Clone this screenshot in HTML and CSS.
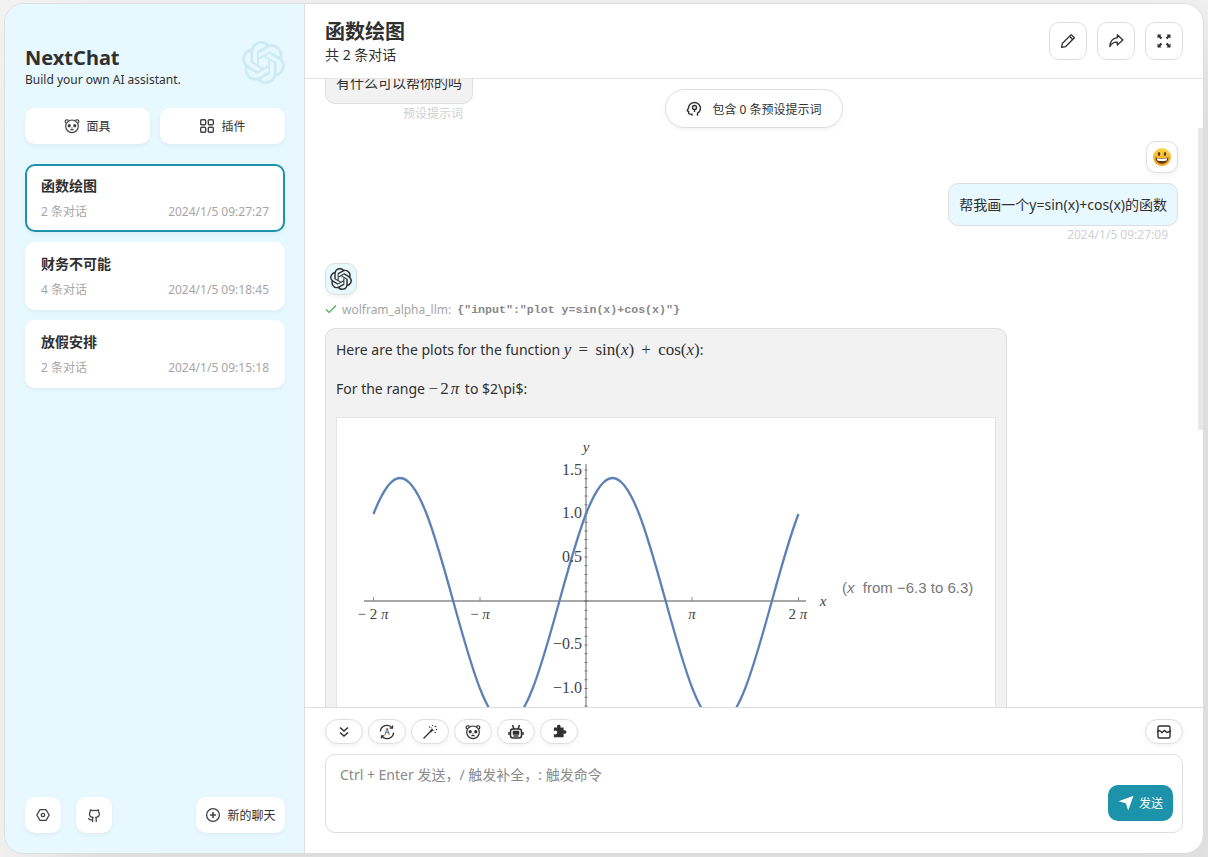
FILE: index.html
```html
<!DOCTYPE html>
<html lang="zh">
<head>
    <meta charset="UTF-8">
    <meta name="viewport" content="width=device-width, initial-scale=1.0">
    <title>NextChat</title>
    <link rel="stylesheet" href="styles.css">
</head>
<body>
    <svg class="defs" width="0" height="0">
        <symbol id="gpt" viewBox="0 0 24 24">
            <path fill="currentColor" d="M22.2819 9.8211a5.9847 5.9847 0 0 0-.5157-4.9108 6.0462 6.0462 0 0 0-6.5098-2.9A6.0651 6.0651 0 0 0 4.9807 4.1818a5.9847 5.9847 0 0 0-3.9977 2.9 6.0462 6.0462 0 0 0 .7427 7.0966 5.98 5.98 0 0 0 .511 4.9107 6.051 6.051 0 0 0 6.5146 2.9001A5.9847 5.9847 0 0 0 13.2599 24a6.0557 6.0557 0 0 0 5.7718-4.2058 5.9894 5.9894 0 0 0 3.9977-2.9001 6.0557 6.0557 0 0 0-.7475-7.0729zm-9.022 12.6081a4.4755 4.4755 0 0 1-2.8764-1.0408l.1419-.0804 4.7783-2.7582a.7948.7948 0 0 0 .3927-.6813v-6.7369l2.02 1.1686a.071.071 0 0 1 .038.052v5.5826a4.504 4.504 0 0 1-4.4945 4.4944zm-9.6607-4.1254a4.4708 4.4708 0 0 1-.5346-3.0137l.142.0852 4.783 2.7582a.7712.7712 0 0 0 .7806 0l5.8428-3.3685v2.3324a.0804.0804 0 0 1-.0332.0615L9.74 19.9502a4.4992 4.4992 0 0 1-6.1408-1.6464zM2.3408 7.8956a4.485 4.485 0 0 1 2.3655-1.9728V11.6a.7664.7664 0 0 0 .3879.6765l5.8144 3.3543-2.0201 1.1685a.0757.0757 0 0 1-.071 0l-4.8303-2.7865A4.504 4.504 0 0 1 2.3408 7.872zm16.5963 3.8558L13.1038 8.364 15.1192 7.2a.0757.0757 0 0 1 .071 0l4.8303 2.7913a4.4944 4.4944 0 0 1-.6765 8.1042v-5.6772a.79.79 0 0 0-.407-.667zm2.0107-3.0231l-.142-.0852-4.7735-2.7818a.7759.7759 0 0 0-.7854 0L9.409 9.2297V6.8974a.0662.0662 0 0 1 .0284-.0615l4.8303-2.7866a4.4992 4.4992 0 0 1 6.6802 4.66zM8.3065 12.863l-2.02-1.1638a.0804.0804 0 0 1-.038-.0567V6.0742a4.4992 4.4992 0 0 1 7.3757-3.4537l-.142.0805L8.704 5.459a.7948.7948 0 0 0-.3927.6813zm1.0976-2.3654l2.602-1.4998 2.6069 1.4998v2.9994l-2.5974 1.4997-2.6067-1.4997Z"/>
        </symbol>
        <symbol id="panda" viewBox="0 0 16 16">
            <g fill="none" stroke="currentColor" stroke-width="1.200">
                <circle cx="8" cy="8.300" r="6.300"/>
                <path d="M2.600 5.200C1.500 4.800 1 4 1.200 3c.3-1 1.400-1.500 2.400-1.100.4.200.7.400.9.700M13.400 5.200c1.100-.4 1.600-1.200 1.400-2.200-.3-1-1.400-1.500-2.400-1.100-.4.200-.7.400-.9.700"/>
                <path d="M6.400 12.100c1-.8 2.200-.8 3.200 0"/>
            </g>
            <ellipse cx="5.200" cy="7.800" rx="1.600" ry="1.800" fill="currentColor"/>
            <ellipse cx="10.800" cy="7.800" rx="1.600" ry="1.800" fill="currentColor"/>
            <circle cx="8" cy="9.800" r=".6" fill="currentColor"/>
        </symbol>
    </svg>

    <div class="window">
        <aside class="sidebar">
            <div class="side-head">
                <div>
                    <div class="side-title">NextChat</div>
                    <div class="side-sub">Build your own AI assistant.</div>
                </div>
                <svg class="side-logo" width="43" height="43"><use href="#gpt"/></svg>
            </div>

            <div class="side-tabs">
                <button class="side-btn">
                    <svg width="16" height="16"><use href="#panda"/></svg>
                    <span>面具</span>
                </button>
                <button class="side-btn">
                    <svg width="16" height="16" viewBox="0 0 16 16" fill="none" stroke="currentColor" stroke-width="1.400">
                        <rect x="1.700" y="1.700" width="5" height="5" rx="1"/>
                        <rect x="9.300" y="1.700" width="5" height="5" rx="1"/>
                        <rect x="1.700" y="9.300" width="5" height="5" rx="1"/>
                        <rect x="9.300" y="9.300" width="5" height="5" rx="1"/>
                    </svg>
                    <span>插件</span>
                </button>
            </div>

            <div class="chat-list">
                <div class="chat-item selected">
                    <div class="chat-title">函数绘图</div>
                    <div class="chat-info"><span>2 条对话</span><span>2024/1/5 09:27:27</span></div>
                </div>
                <div class="chat-item">
                    <div class="chat-title">财务不可能</div>
                    <div class="chat-info"><span>4 条对话</span><span>2024/1/5 09:18:45</span></div>
                </div>
                <div class="chat-item">
                    <div class="chat-title">放假安排</div>
                    <div class="chat-info"><span>2 条对话</span><span>2024/1/5 09:15:18</span></div>
                </div>
            </div>

            <div class="side-foot">
                <button class="side-btn square">
                    <svg width="16" height="16" viewBox="0 0 16 16" fill="none" stroke="currentColor" stroke-width="1.300">
                        <path d="M5 2.600h6L14.200 8 11 13.400H5L1.800 8z" stroke-linejoin="round"/>
                        <circle cx="8" cy="8" r="1.700"/>
                    </svg>
                </button>
                <button class="side-btn square">
                    <svg width="16" height="16" viewBox="0 0 16 16" fill="none" stroke="currentColor" stroke-width="1.300" stroke-linecap="round" stroke-linejoin="round">
                        <path d="M10.200 14.600v-2.500c0-.9-.2-1.300-.6-1.700 2.100-.2 3.700-1.100 3.700-3.500 0-.8-.3-1.500-.8-2 .2-.6.2-1.300-.1-2-.7 0-1.400.3-2 .8a7 7 0 0 0-4 0c-.6-.5-1.300-.8-2-.8-.3.7-.3 1.400-.1 2-.5.5-.8 1.200-.8 2 0 2.400 1.600 3.300 3.700 3.500-.4.4-.6.8-.6 1.700v2.500"/>
                        <path d="M5.800 12.800c-1.800.6-2.400-.6-3.200-1.200"/>
                    </svg>
                </button>
                <button class="side-btn new-chat">
                    <svg width="16" height="16" viewBox="0 0 16 16" fill="none" stroke="currentColor" stroke-width="1.300">
                        <circle cx="8" cy="8" r="6.400"/>
                        <path d="M8 5v6M5 8h6" stroke-width="1.600"/>
                    </svg>
                    <span>新的聊天</span>
                </button>
            </div>
        </aside>

        <main class="chat">
            <header class="chat-head">
                <div>
                    <div class="head-title">函数绘图</div>
                    <div class="head-sub">共 2 条对话</div>
                </div>
                <div class="head-actions">
                    <button class="head-btn">
                        <svg width="16" height="16" viewBox="0 0 16 16" fill="none" stroke="currentColor" stroke-width="1.300" stroke-linejoin="round">
                            <path d="M11.200 1.600l3.200 3.200-8.900 8.900-3.900.7.700-3.900z"/>
                            <path d="M9.500 3.300l3.200 3.200"/>
                        </svg>
                    </button>
                    <button class="head-btn">
                        <svg width="16" height="16" viewBox="0 0 16 16" fill="none" stroke="currentColor" stroke-width="1.300" stroke-linejoin="round">
                            <path d="M9.300 1.800l5.600 5.100-5.600 5.100V9.200C6 9 3.600 10.400 1.800 13.600 2 8.800 4.800 5.400 9.300 4.700z"/>
                        </svg>
                    </button>
                    <button class="head-btn">
                        <svg width="16" height="16" viewBox="0 0 16 16" fill="currentColor">
                            <path d="M1.500 1.500h4L4.300 2.700l2 2-1.600 1.600-2-2L1.500 5.500zM14.500 1.500v4l-1.200-1.200-2 2-1.600-1.600 2-2-1.200-1.200zM1.500 14.500v-4l1.200 1.200 2-2 1.600 1.600-2 2 1.200 1.200zM14.500 14.500h-4l1.200-1.200-2-2 1.600-1.600 2 2 1.200-1.200z"/>
                        </svg>
                    </button>
                </div>
            </header>

            <section class="chat-body">
                <div class="prompt-toast">
                    <svg width="16" height="16" viewBox="0 0 16 16" fill="none" stroke="currentColor" stroke-width="1.400" stroke-linejoin="round">
                        <path d="M11.500 14.800v-2.600c1.800-1.200 3-3 3-5 0-3.200-2.800-5.700-6-5.700-3.200 0-5.800 2.400-6 5.400L1.200 9.800l1.400.6v1.700c0 .6.500 1 1.100 1H6v1.700"/>
                        <circle cx="8.500" cy="6.500" r="2"/>
                        <path d="M8.500 8.500v2.500"/>
                    </svg>
                    <span>包含 0 条预设提示词</span>
                </div>

                <div class="scroll-thumb"></div>

                <div class="messages">
                    <div class="msg first">
                        <div class="bubble">有什么可以帮你的吗</div>
                        <div class="msg-date">预设提示词</div>
                    </div>

                    <div class="msg user">
                        <div class="avatar">
                            <svg width="20" height="20" viewBox="0 0 20 20">
                                <defs>
                                    <linearGradient id="smile" x1="0" y1="0" x2="0" y2="1">
                                        <stop offset="0" stop-color="#fbd54a"/>
                                        <stop offset="1" stop-color="#ee9b16"/>
                                    </linearGradient>
                                </defs>
                                <circle cx="10" cy="10" r="9" fill="url(#smile)"/>
                                <ellipse cx="7" cy="7" rx="1.200" ry="2" fill="#5b3a10"/>
                                <ellipse cx="13" cy="7" rx="1.200" ry="2" fill="#5b3a10"/>
                                <path d="M3.500 10.500c4 1 9 1 13 0-.3 4-3 6.200-6.500 6.200s-6.200-2.200-6.500-6.200z" fill="#5b3a10"/>
                                <path d="M4.800 11.300c3.400.6 7 .6 10.400 0-.2 1.200-.6 2-1 2.400-2.700.4-5.700.4-8.400 0-.4-.5-.8-1.200-1-2.400z" fill="#fff"/>
                            </svg>
                        </div>
                        <div class="bubble">帮我画一个y=sin(x)+cos(x)的函数</div>
                        <div class="msg-date">2024/1/5 09:27:09</div>
                    </div>

                    <div class="msg">
                        <div class="avatar">
                            <svg width="22" height="22"><use href="#gpt"/></svg>
                        </div>
                        <div class="tool-line">
                            <svg width="12" height="12" viewBox="0 0 12 12" fill="none" stroke="#4caf50" stroke-width="1.200">
                                <path d="M1 6.500l3.200 3L11 2.500"/>
                            </svg>
                            <span class="tool-name">wolfram_alpha_llm:</span>
                            <code class="tool-args">{"input":"plot y=sin(x)+cos(x)"}</code>
                        </div>
                        <div class="bubble answer">
                            <p>Here are the plots for the function <span class="math"><i>y</i> = sin(<i>x</i>) + cos(<i>x</i>)</span>:</p>
                            <p>For the range <span class="math range">−2<i>π</i></span> to $2\pi$:</p>
                            <svg class="plot" width="660" height="300" viewBox="336 417 660 300">
                                <rect x="336.500" y="417.500" width="659" height="299" fill="#fff" stroke="#e4e4e4"/>
                                <path d="M364 601H806M586 464V718" stroke="#8a8a8a" stroke-width="1.300" fill="none"/>
                                <path d="M586 601V464M586 601V718" stroke="#777" stroke-width="3" stroke-dasharray="1 7.700" fill="none"/>
                                <path d="M373.500 597v4M480 597v4M692 597v4M798.500 597v4" stroke="#8a8a8a" fill="none"/>
                                <path fill="none" stroke="#5e81b5" stroke-width="2.300" d="M373.500 514
                                    c8.850 -22.780 17.710 -36 26.560 -36 c8.850 0 17.710 13.220 26.560 36
                                    c8.850 22.780 17.710 54.800 26.560 87 c8.850 32.200 17.710 64.220 26.560 87
                                    c8.850 22.780 17.710 36 26.560 36 c8.850 0 17.710 -13.220 26.560 -36
                                    c8.850 -22.780 17.710 -54.800 26.560 -87 c8.850 -32.200 17.710 -64.220 26.560 -87
                                    c8.850 -22.780 17.710 -36 26.560 -36 c8.850 0 17.710 13.220 26.560 36
                                    c8.850 22.780 17.710 54.800 26.560 87 c8.850 32.200 17.710 64.220 26.560 87
                                    c8.850 22.780 17.710 36 26.560 36 c8.850 0 17.710 -13.220 26.560 -36
                                    c8.850 -22.780 17.710 -54.800 26.560 -87 c8.850 -32.200 17.710 -64.220 26.560 -87"/>
                                <g class="plot-num" text-anchor="end">
                                    <text x="582" y="475">1.5</text>
                                    <text x="582" y="518">1.0</text>
                                    <text x="582" y="562">0.5</text>
                                    <text x="582" y="649">−0.5</text>
                                    <text x="582" y="693">−1.0</text>
                                </g>
                                <g class="plot-num small" text-anchor="middle">
                                    <text x="373" y="619">− 2 <tspan class="plot-it">π</tspan></text>
                                    <text x="480" y="619">− <tspan class="plot-it">π</tspan></text>
                                    <text x="692" y="619" class="plot-it">π</text>
                                    <text x="798" y="619">2 <tspan class="plot-it">π</tspan></text>
                                    <text x="823" y="606" class="plot-it">x</text>
                                    <text x="586" y="452" class="plot-it">y</text>
                                </g>
                                <text class="plot-range" x="842" y="593">(<tspan font-style="italic">x</tspan>  from −6.3 to 6.3)</text>
                            </svg>
                        </div>
                    </div>
                </div>
            </section>

            <footer class="chat-input">
                <div class="tool-row">
                    <div class="chips">
                        <button class="chip">
                            <svg width="16" height="16" viewBox="0 0 16 16" fill="none" stroke="currentColor" stroke-width="1.500">
                                <path d="M4 3.500l4 3.500 4-3.500M4 8.500l4 3.500 4-3.500"/>
                            </svg>
                        </button>
                        <button class="chip">
                            <svg width="16" height="16" viewBox="0 0 16 16" fill="none" stroke="currentColor" stroke-width="1.300">
                                <path d="M1.400 7.500a6.600 6.600 0 0 1 11.600-3.800M14.600 8.500a6.600 6.600 0 0 1-11.600 3.800"/>
                                <path d="M13.500 1.400v2.800h-2.800M2.500 14.600v-2.800h2.800"/>
                                <text class="chip-letter" x="8" y="11" text-anchor="middle">A</text>
                            </svg>
                        </button>
                        <button class="chip">
                            <svg width="16" height="16" viewBox="0 0 16 16" fill="none" stroke="currentColor">
                                <path d="M1.500 14.500L8.500 7.500" stroke-width="1.200"/>
                                <path d="M8.300 7.700l2.500-2.500" stroke-width="2"/>
                                <g fill="currentColor" stroke="none">
                                    <circle cx="7.500" cy="3" r=".7"/>
                                    <circle cx="10.500" cy="1.600" r=".7"/>
                                    <circle cx="13.500" cy="2.500" r=".8"/>
                                    <circle cx="14.500" cy="5.500" r=".7"/>
                                    <circle cx="13.200" cy="8.500" r=".7"/>
                                    <circle cx="11.800" cy="6.800" r=".5"/>
                                    <circle cx="9.200" cy="3.800" r=".5"/>
                                </g>
                            </svg>
                        </button>
                        <button class="chip">
                            <svg width="16" height="16"><use href="#panda"/></svg>
                        </button>
                        <button class="chip">
                            <svg width="16" height="16" viewBox="0 0 16 16" fill="none" stroke="currentColor" stroke-width="1.500">
                                <rect x="2.500" y="5" width="11" height="9" rx="2.500"/>
                                <path d="M4.500 1l1.500 4M11.500 1L10 5M1 8v3M15 8v3"/>
                                <path d="M5.500 7.500h5v2.500h-5z" fill="currentColor"/>
                                <path d="M5.500 12h5"/>
                            </svg>
                        </button>
                        <button class="chip">
                            <svg width="16" height="16" viewBox="0 0 16 16" fill="currentColor">
                                <path d="M6 2.500C6 1.400 6.900.8 7.800.8s1.800.6 1.800 1.700c0 .5-.2.800-.3 1.100h3.300v3c.4-.2.700-.3 1.100-.3 1 0 1.700.8 1.700 1.700s-.7 1.800-1.700 1.800c-.4 0-.7-.1-1.100-.3v3.800H2.900V9.900c.4.300.9.500 1.400.5 1.100 0 1.900-.9 1.900-1.900S5.400 6.600 4.300 6.600c-.5 0-1 .2-1.400.5v-3.500h3.400C6.100 3.300 6 2.900 6 2.500z"/>
                            </svg>
                        </button>
                    </div>
                    <button class="chip">
                        <svg width="16" height="16" viewBox="0 0 16 16" fill="none" stroke="currentColor" stroke-width="1.400">
                            <rect x="2" y="2" width="12" height="12" rx="1.500"/>
                            <path d="M1 8l2.500-1.500L6 8.500l2.500-2 2.500 2L15 7"/>
                        </svg>
                    </button>
                </div>
                <div class="input-box">
                    <div class="placeholder">Ctrl + Enter 发送，/ 触发补全，: 触发命令</div>
                    <button class="send-btn">
                        <svg width="16" height="16" viewBox="0 0 16 16" fill="#fff">
                            <path d="M15.500 .8L10.200 15.500 7.800 8.300 .6 6.300z"/>
                        </svg>
                        <span>发送</span>
                    </button>
                </div>
            </footer>
        </main>
    </div>
</body>
</html>
```

FILE: styles.css
```css
* {
    box-sizing: border-box;
}
body {
    margin: 0;
    height: 857px;
    overflow: hidden;
    display: flex;
    align-items: center;
    justify-content: center;
    background-color: #f3f3f3;
    font-family: "Noto Sans", "Noto Sans CJK SC", sans-serif;
    font-size: 14px;
    color: #303030;
}
button {
    font: inherit;
    color: inherit;
    border: none;
    background: none;
    padding: 0;
}
svg {
    display: block;
    flex-shrink: 0;
}
.defs {
    position: absolute;
}
.window {
    width: 1200px;
    height: 851px;
    display: flex;
    background: white;
    border: 1px solid #dedede;
    border-radius: 20px;
    overflow: hidden;
    box-shadow: 50px 50px 100px 10px rgba(0, 0, 0, 0.1);
}

/* sidebar */
.sidebar {
    width: 300px;
    flex-shrink: 0;
    display: flex;
    flex-direction: column;
    padding: 20px 19px 20px 20px;
    background-color: #e7f8ff;
    border-right: 1px solid #dedede;
}
.side-head {
    display: flex;
    justify-content: space-between;
    padding-top: 20px;
    height: 84px;
}
.side-title {
    font-size: 20px;
    font-weight: 700;
    line-height: 28px;
}
.side-sub {
    font-size: 12px;
    line-height: 16px;
}
.side-logo {
    color: #1d93ab;
    opacity: 0.12;
    margin-top: -3px;
}
.side-tabs {
    display: flex;
    gap: 10px;
}
.side-btn {
    flex: 1;
    height: 36px;
    display: flex;
    align-items: center;
    justify-content: center;
    gap: 5px;
    background: white;
    border-radius: 10px;
    font-size: 12px;
    box-shadow: 0 2px 4px 0 rgba(0, 0, 0, 0.05);
}
.side-btn svg {
    margin-right: 1px;
    color: #444;
}
.chat-list {
    flex: 1;
    padding-top: 20px;
}
.chat-item {
    height: 68px;
    margin-bottom: 10px;
    padding: 10px 14px;
    background: white;
    border: 2px solid transparent;
    border-radius: 10px;
    box-shadow: 0 2px 4px 0 rgba(0, 0, 0, 0.05);
}
.chat-item.selected {
    border-color: #1d93ab;
}
.chat-title {
    font-size: 14px;
    font-weight: 700;
    line-height: 20px;
}
.chat-info {
    display: flex;
    justify-content: space-between;
    margin-top: 8px;
    font-size: 12px;
    line-height: 16px;
    color: #a6a6a6;
}
.side-foot {
    display: flex;
    gap: 15px;
}
.side-btn.square {
    flex: none;
    width: 36px;
}
.side-btn.new-chat {
    flex: none;
    width: 89px;
    margin-left: auto;
}

/* chat */
.chat {
    flex: 1;
    min-width: 0;
    display: flex;
    flex-direction: column;
}
.chat-head {
    height: 75px;
    flex-shrink: 0;
    display: flex;
    justify-content: space-between;
    align-items: center;
    padding: 0 20px;
    border-bottom: 1px solid #e4e4e4;
}
.head-title {
    font-size: 20px;
    font-weight: 700;
    line-height: 28px;
}
.head-sub {
    font-size: 14px;
    line-height: 18px;
}
.head-actions {
    display: flex;
    gap: 10px;
}
.head-btn {
    width: 38px;
    height: 38px;
    display: flex;
    align-items: center;
    justify-content: center;
    border: 1px solid #dedede;
    border-radius: 10px;
}
.chat-body {
    flex: 1;
    min-height: 0;
    position: relative;
    overflow: hidden;
}
.messages {
    margin-top: -18px;
    padding: 0 20px;
}
.prompt-toast {
    position: absolute;
    top: 10px;
    left: 360px;
    width: 178px;
    height: 39px;
    display: flex;
    align-items: center;
    justify-content: center;
    gap: 10px;
    background: white;
    border: 1px solid #dedede;
    border-radius: 20px;
    font-size: 12px;
    box-shadow: 0 2px 4px 0 rgba(0, 0, 0, 0.05);
    z-index: 2;
}
.scroll-thumb {
    position: absolute;
    top: 49px;
    right: 0;
    width: 5px;
    height: 302px;
    background: #e8e8e8;
}
.msg {
    display: flex;
    flex-direction: column;
    align-items: flex-start;
    margin-bottom: 20px;
}
.msg.first {
    width: fit-content;
    margin-bottom: 19px;
}
.msg.first .msg-date {
    padding-top: 1px;
}
.msg.user {
    align-items: flex-end;
}
.bubble {
    padding: 10px;
    line-height: 21px;
    background: rgba(0, 0, 0, 0.05);
    border: 1px solid #dedede;
    border-radius: 10px;
}
.msg.user .bubble {
    margin-top: 10px;
    margin-right: 5px;
    background: #e7f8ff;
}
.msg-date {
    align-self: flex-end;
    padding-right: 10px;
    font-size: 12px;
    line-height: 17px;
    color: #d0d0d0;
}
.msg.user .msg-date {
    padding-right: 15px;
}
.avatar {
    width: 32px;
    height: 32px;
    display: flex;
    align-items: center;
    justify-content: center;
    background: #e7f8ff;
    border: 1px solid #dedede;
    border-radius: 10px;
    box-shadow: 0 2px 4px 0 rgba(0, 0, 0, 0.05);
}
.msg.user .avatar {
    margin-right: 5px;
    background: white;
}
.tool-line {
    height: 18px;
    margin: 5px 0 10px;
    display: flex;
    align-items: center;
    font-size: 12px;
    color: #a6a6a6;
}
.tool-name {
    margin-left: 5px;
}
.tool-args {
    margin-left: 6px;
    font-family: "Liberation Mono", monospace;
    font-size: 11.600px;
    font-weight: 700;
    color: #888;
}
.bubble.answer {
    width: 682px;
    height: 600px;
    line-height: 22px;
}
.answer p {
    margin: 0 0 17px;
}
.math {
    font-family: "Liberation Serif", serif;
    font-size: 17px;
    word-spacing: 3px;
}
.math.range {
    letter-spacing: 2px;
}
.plot-num {
    font-family: "Liberation Serif", serif;
    font-size: 16px;
    fill: #444;
}
.plot-num.small {
    font-size: 15px;
}
.plot-it {
    font-style: italic;
}
.plot-range {
    font-family: "Liberation Sans", sans-serif;
    font-size: 15px;
    fill: #777;
    white-space: pre;
}

/* input */
.chat-input {
    height: 146px;
    flex-shrink: 0;
    padding: 11px 20px 20px;
    border-top: 1px solid #dedede;
}
.tool-row {
    display: flex;
    justify-content: space-between;
}
.chips {
    display: flex;
    gap: 5px;
}
.chip {
    width: 38px;
    height: 25px;
    display: flex;
    align-items: center;
    justify-content: center;
    background: white;
    border: 1px solid #dedede;
    border-radius: 20px;
    box-shadow: 0 2px 4px 0 rgba(0, 0, 0, 0.05);
}
.chip-letter {
    font-size: 8px;
    font-weight: 400;
    fill: currentColor;
    stroke: none;
}
.input-box {
    position: relative;
    height: 79px;
    margin-top: 10px;
    padding: 10px 14px;
    border: 1px solid #dedede;
    border-radius: 10px;
}
.placeholder {
    font-size: 14px;
    line-height: 20px;
    color: #8a8a8a;
}
.send-btn {
    position: absolute;
    right: 9px;
    bottom: 11px;
    width: 65px;
    height: 36px;
    display: flex;
    align-items: center;
    justify-content: center;
    gap: 5px;
    background: #1d93ab;
    border-radius: 10px;
    font-size: 12px;
    color: white;
}
```
